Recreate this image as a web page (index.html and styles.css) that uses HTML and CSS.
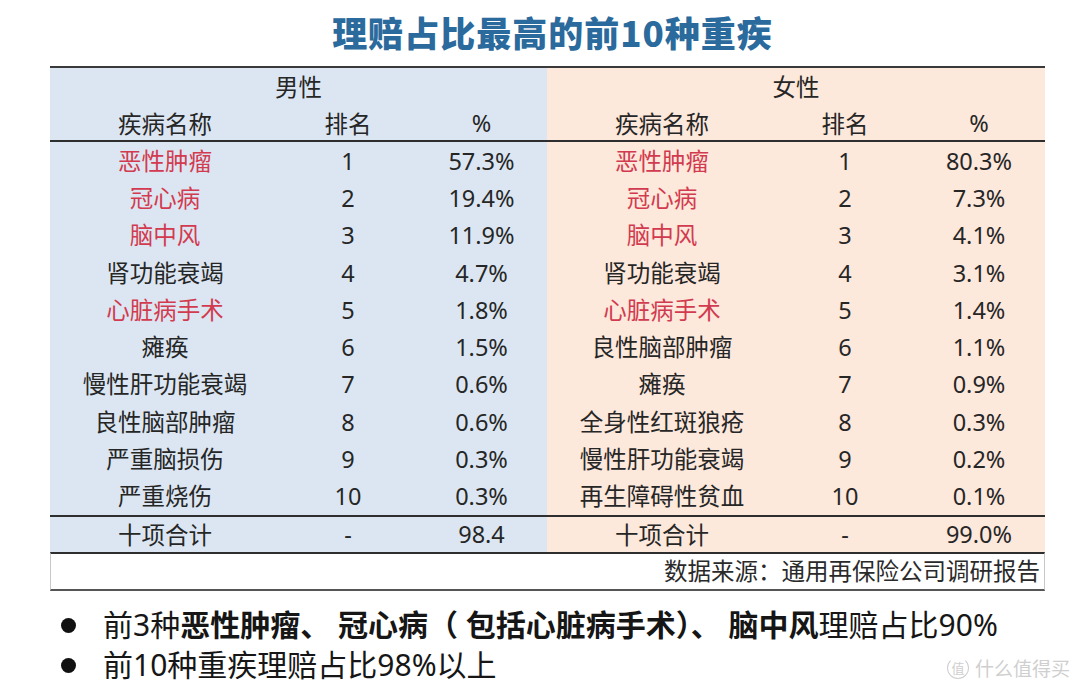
FILE: index.html
```html
<!DOCTYPE html>
<html lang="zh-CN">
<head>
<meta charset="utf-8">
<title>理赔占比最高的前10种重疾</title>
<link rel="stylesheet" href="styles.css">
</head>
<body>
<main class="page">
  <h1 class="title">理赔占比最高的前10种重疾</h1>
  <section class="table">
    <div class="body-area">
      <div class="row head">
        <div class="group">男性</div>
        <div class="group">女性</div>
      </div>
      <div class="row cols">
        <div>疾病名称</div><div>排名</div><div>%</div>
        <div>疾病名称</div><div>排名</div><div>%</div>
      </div>
      <div class="rows">
        <div class="row"><div class="red">恶性肿瘤</div><div>1</div><div>57.3%</div><div class="red">恶性肿瘤</div><div>1</div><div>80.3%</div></div>
        <div class="row"><div class="red">冠心病</div><div>2</div><div>19.4%</div><div class="red">冠心病</div><div>2</div><div>7.3%</div></div>
        <div class="row"><div class="red">脑中风</div><div>3</div><div>11.9%</div><div class="red">脑中风</div><div>3</div><div>4.1%</div></div>
        <div class="row"><div>肾功能衰竭</div><div>4</div><div>4.7%</div><div>肾功能衰竭</div><div>4</div><div>3.1%</div></div>
        <div class="row"><div class="red">心脏病手术</div><div>5</div><div>1.8%</div><div class="red">心脏病手术</div><div>5</div><div>1.4%</div></div>
        <div class="row"><div>瘫痪</div><div>6</div><div>1.5%</div><div>良性脑部肿瘤</div><div>6</div><div>1.1%</div></div>
        <div class="row"><div>慢性肝功能衰竭</div><div>7</div><div>0.6%</div><div>瘫痪</div><div>7</div><div>0.9%</div></div>
        <div class="row"><div>良性脑部肿瘤</div><div>8</div><div>0.6%</div><div>全身性红斑狼疮</div><div>8</div><div>0.3%</div></div>
        <div class="row"><div>严重脑损伤</div><div>9</div><div>0.3%</div><div>慢性肝功能衰竭</div><div>9</div><div>0.2%</div></div>
        <div class="row"><div>严重烧伤</div><div>10</div><div>0.3%</div><div>再生障碍性贫血</div><div>10</div><div>0.1%</div></div>
      </div>
      <div class="row total">
        <div>十项合计</div><div>-</div><div>98.4</div>
        <div>十项合计</div><div>-</div><div>99.0%</div>
      </div>
    </div>
    <div class="source">数据来源：通用再保险公司调研报告</div>
  </section>
  <ul class="notes">
    <li>前3种<b>恶性肿瘤、 冠心病（ 包括心脏病手术）、 脑中风</b>理赔占比90%</li>
    <li>前10种重疾理赔占比98%以上</li>
  </ul>
  <div class="watermark"><span class="wm-logo">值</span><span class="wm-text">什么值得买</span></div>
</main>
</body>
</html>
```
FILE: styles.css
```css
html, body {
  margin: 0;
  padding: 0;
  background: #ffffff;
}
body {
  font-family: "Noto Sans", "Noto Sans CJK SC", sans-serif;
  color: #262626;
}
.page {
  position: relative;
  width: 1080px;
  height: 696px;
  padding-left: 50px;
  box-sizing: border-box;
  overflow: hidden;
}
.title {
  width: 995px;
  margin: 0;
  padding-top: 10px;
  padding-left: 10px;
  height: 66px;
  box-sizing: border-box;
  text-align: center;
  font-family: "Noto Sans CJK SC", sans-serif;
  font-weight: 900;
  font-size: 35px;
  line-height: 44px;
  letter-spacing: 1px;
  color: #2b6a9c;
}
.table {
  width: 995px;
  border-top: 2px solid #3a3a3a;
}
.body-area {
  background: linear-gradient(to right, #dce6f2 0, #dce6f2 497px, #fde8dc 497px, #fde8dc 100%);
}
.row {
  display: grid;
  grid-template-columns: 230px 136px 131px 230px 136px 132px;
  align-items: center;
  text-align: center;
  font-size: 23.5px;
  height: 37.3px;
}
.row.head {
  grid-template-columns: 497px 498px;
  height: 38px;
  line-height: 38px;
}
.row.cols {
  height: 34px;
  border-bottom: 2px solid #2e2e2e;
}
.rows .row div {
  line-height: 30px;
}
.red {
  color: #d23b4f;
}
.row.total {
  border-top: 2px solid #2e2e2e;
  height: 35px;
}
.source {
  height: 35px;
  line-height: 35px;
  border-top: 2px solid #2e2e2e;
  border-bottom: 2px solid #555;
  border-left: 1px solid #c8c8c8;
  border-right: 1px solid #c8c8c8;
  text-align: right;
  padding-right: 4px;
  font-size: 23.5px;
  color: #2a2a2a;
}
.notes {
  list-style: none;
  margin: 14px 0 0 0;
  padding: 0 0 0 53px;
  font-family: "Noto Sans", "Noto Sans CJK SC", sans-serif;
  font-size: 30px;
  line-height: 40px;
  color: #161616;
}
.notes li {
  position: relative;
}
.notes li::before {
  content: "";
  position: absolute;
  left: -42px;
  top: 13px;
  width: 15px;
  height: 15px;
  border-radius: 50%;
  background: #111;
}
.notes b {
  font-weight: 700;
}
.watermark {
  position: absolute;
  right: 10px;
  bottom: 16px;
  display: flex;
  align-items: center;
  gap: 6px;
  color: #cfcfcf;
  font-family: "Noto Sans CJK SC", sans-serif;
}
.wm-logo {
  width: 20px;
  height: 20px;
  border: 1.5px solid #cfcfcf;
  border-top-color: transparent;
  border-radius: 50%;
  font-size: 13px;
  line-height: 20px;
  text-align: center;
}
.wm-text {
  font-size: 19px;
  line-height: 24px;
}
```
